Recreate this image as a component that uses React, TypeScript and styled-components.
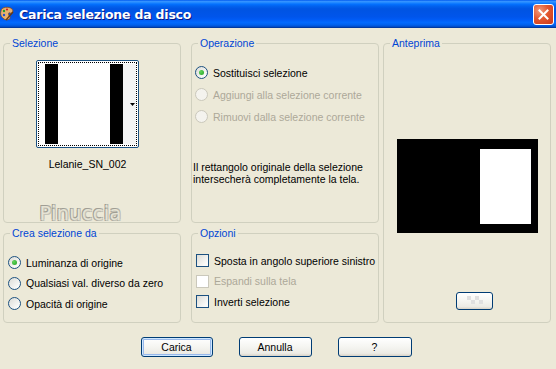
import styled, { createGlobalStyle } from 'styled-components';

const Global = createGlobalStyle`
  html, body { margin: 0; padding: 0; background: #ece9d8; }
  body { font-family: "Liberation Sans", Arial, sans-serif; font-size: 10.5px; color: #000; }
`;

const Window = styled.div`
  width: 556px;
  height: 369px;
  background: #ece9d8;
  display: flex;
  flex-direction: column;
  overflow: hidden;
`;

const TitleBar = styled.div`
  height: 28px;
  display: flex;
  align-items: center;
  padding: 0 1px 0 0;
  background: linear-gradient(to bottom, #0058ee 0%, #3593ff 5%, #288eff 8%, #127dff 12%, #036ffc 16%, #0262ee 22%, #0057e5 30%, #0054e3 36%, #0055eb 60%, #005bf5 70%, #026afe 80%, #0062ef 88%, #0052d6 94%, #0040ab 97%, #003092 100%);
`;

const TitleText = styled.span`
  flex: 1;
  margin-left: 5px;
  color: #fff;
  font-family: "DejaVu Sans", "Liberation Sans", sans-serif;
  font-weight: bold;
  font-size: 12.5px;
  letter-spacing: -0.2px;
  text-shadow: 1px 1px 0 #0a1883;
`;

const CloseButton = styled.div`
  width: 19px;
  height: 19px;
  margin-right: 1px;
  border: 1px solid #fff;
  border-radius: 3px;
  background: radial-gradient(circle at 30% 30%, #f29a7c 0%, #e3572f 45%, #c8381a 100%);
  display: flex;
  align-items: center;
  justify-content: center;
`;

const Body = styled.div`
  display: grid;
  grid-template-columns: 178px 10px 188px 4px 168px;
  grid-template-rows: 186px 96px;
  row-gap: 4px;
  padding: 9px 0 0 3px;
`;

const Group = styled.fieldset<{ $col: number; $row: string }>`
  grid-column: ${p => p.$col};
  grid-row: ${p => p.$row};
  margin: 0;
  padding: 0;
  min-width: 0;
  box-sizing: border-box;
  height: 100%;
  border: 1px solid #d0d0bf;
  border-radius: 4px;
  display: flex;
  flex-direction: column;
`;

const Legend = styled.legend`
  color: #0046d5;
  margin-left: 6px;
  padding: 0 2px;
  line-height: 13px;
`;

const SelectionContent = styled.div`
  display: flex;
  flex-direction: column;
  align-items: center;
  padding-right: 9px;
`;

const Thumb = styled.div`
  margin-top: 10px;
  width: 99px;
  height: 84px;
  border: 1px solid #1c5180;
  border-radius: 2px;
  background: #fff;
  padding: 1px;
  box-sizing: content-box;
`;

const ThumbFocus = styled.div`
  height: 100%;
  border: 1px dotted #000;
  box-sizing: border-box;
  display: flex;
  padding: 1px 0 1px 6px;
  align-items: stretch;
`;

const Bar = styled.div<{ $w: number; $c: string }>`
  width: ${p => p.$w}px;
  background: ${p => p.$c};
`;

const ArrowArea = styled.div`
  flex: 1;
  display: flex;
  align-items: center;
  justify-content: flex-end;
  padding-right: 1px;
  background: #f4f4f4;
`;

const Caption = styled.div`
  margin-top: 10px;
  line-height: 13px;
`;

const Watermark = styled.div`
  margin-top: 31px;
  margin-left: -14px;
  font-family: "DejaVu Sans", sans-serif;
  font-size: 19px;
  letter-spacing: 0.5px;
  line-height: 22px;
  color: #e6e3d4;
  text-shadow: -1px -1px 0 #a09e94, 1px 1px 0 #c4c2b6, 1px -1px 0 #b4b2a8, -1px 1px 0 #acaaa0;
`;

const Options = styled.div<{ $top: number; $gap: number; $left: number }>`
  display: flex;
  flex-direction: column;
  gap: ${p => p.$gap}px;
  margin: ${p => p.$top}px 0 0 ${p => p.$left}px;
`;

const Row = styled.label<{ $disabled?: boolean }>`
  display: flex;
  align-items: center;
  gap: 5px;
  height: 13px;
  color: ${p => (p.$disabled ? '#aca899' : '#000')};
  white-space: nowrap;
`;

const RadioCircle = styled.span<{ $disabled?: boolean }>`
  width: 13px;
  height: 13px;
  box-sizing: border-box;
  border-radius: 50%;
  border: 1px solid ${p => (p.$disabled ? '#cac8bb' : '#1c5180')};
  background: ${p => (p.$disabled ? '#f4f3ee' : 'linear-gradient(135deg, #dcdcd7 0%, #fbfbf9 80%)')};
  display: flex;
  align-items: center;
  justify-content: center;
  flex-shrink: 0;
`;

const RadioDot = styled.span`
  width: 5px;
  height: 5px;
  border-radius: 50%;
  background: radial-gradient(circle at 35% 35%, #63d55d, #21a121);
`;

const CheckBox = styled.span<{ $disabled?: boolean }>`
  width: 13px;
  height: 13px;
  box-sizing: border-box;
  border: 1px solid ${p => (p.$disabled ? '#cac8bb' : '#1c5180')};
  background: ${p => (p.$disabled ? '#fff' : 'linear-gradient(135deg, #dcdcd7 0%, #fbfbf9 80%)')};
  flex-shrink: 0;
`;

const Note = styled.p`
  margin: 38px 0 0 1px;
  line-height: 12px;
`;

const PreviewCanvas = styled.div`
  margin: 89px auto 0;
  width: 141px;
  height: 94px;
  background: #000;
  display: flex;
  justify-content: flex-end;
  padding: 10px 7px 9px 0;
  box-sizing: border-box;
`;

const PreviewSel = styled.div`
  width: 51px;
  background: #fff;
`;

const XpButton = styled.button<{ $w: number; $h?: number; $default?: boolean }>`
  width: ${p => p.$w}px;
  height: ${p => p.$h ?? 20}px;
  border: 1px solid #003c74;
  border-radius: 3px;
  padding: 0;
  font-family: inherit;
  font-size: 10.5px;
  color: #000;
  background: linear-gradient(to bottom, #ffffff 0%, #f5f5f1 50%, #ecebe5 85%, #d8d2c6 100%);
  box-shadow: ${p => (p.$default ? 'inset 0 0 0 1px #cee7ff, inset 0 0 0 2px #98b8ea' : 'none')};
  display: flex;
  align-items: center;
  justify-content: center;
`;

const PreviewButton = styled(XpButton)`
  margin: 59px 0 0 72px;
`;

const Footer = styled.div`
  display: flex;
  justify-content: center;
  gap: 26px;
  padding: 14px 4px 0 0;
`;

function Radio({ label, checked, disabled }: { label: string; checked?: boolean; disabled?: boolean }) {
  return (
    <Row $disabled={disabled}>
      <RadioCircle $disabled={disabled}>{checked && <RadioDot />}</RadioCircle>
      {label}
    </Row>
  );
}

function Check({ label, disabled }: { label: string; disabled?: boolean }) {
  return (
    <Row $disabled={disabled}>
      <CheckBox $disabled={disabled} />
      {label}
    </Row>
  );
}

export default function App() {
  return (
    <>
      <Global />
      <Window>
        <TitleBar>
          <svg width="14" height="16" viewBox="0 0 14 16">
            <path d="M1 5 C1 1 9 0 12 3 C14 5 12 8 10 7 C8 6 8 9 10 11 C11 13 7 15 4 13 C1 11 0 8 1 5Z" fill="#e8b070" stroke="#8a4a1a" strokeWidth="0.8" />
            <circle cx="4" cy="5" r="1.2" fill="#2a9a2a" />
            <circle cx="7" cy="3.5" r="1.1" fill="#d02020" />
            <circle cx="4" cy="9" r="1.2" fill="#2050d0" />
            <path d="M6 14 L13 6" stroke="#6a3a10" strokeWidth="1.4" />
          </svg>
          <TitleText>Carica selezione da disco</TitleText>
          <CloseButton>
            <svg width="11" height="11" viewBox="0 0 11 11">
              <path d="M1.5 1.5 L9.5 9.5 M9.5 1.5 L1.5 9.5" stroke="#fff" strokeWidth="2" strokeLinecap="square" />
            </svg>
          </CloseButton>
        </TitleBar>
        <Body>
          <Group $col={1} $row="1">
            <Legend>Selezione</Legend>
            <SelectionContent>
              <Thumb>
                <ThumbFocus>
                  <Bar $w={13} $c="#000" />
                  <Bar $w={52} $c="#fff" />
                  <Bar $w={13} $c="#000" />
                  <ArrowArea>
                    <svg width="5" height="3" viewBox="0 0 5 3"><path d="M0 0 H5 L2.5 3Z" fill="#000" /></svg>
                  </ArrowArea>
                </ThumbFocus>
              </Thumb>
              <Caption>Lelanie_SN_002</Caption>
              <Watermark>Pinuccia</Watermark>
            </SelectionContent>
          </Group>
          <Group $col={3} $row="1">
            <Legend>Operazione</Legend>
            <Options $top={16} $gap={9} $left={3}>
              <Radio label="Sostituisci selezione" checked />
              <Radio label="Aggiungi alla selezione corrente" disabled />
              <Radio label="Rimuovi dalla selezione corrente" disabled />
            </Options>
            <Note>
              Il rettangolo originale della selezione<br />
              intersecherà completamente la tela.
            </Note>
          </Group>
          <Group $col={5} $row="1 / span 2">
            <Legend>Anteprima</Legend>
            <PreviewCanvas>
              <PreviewSel />
            </PreviewCanvas>
            <PreviewButton $w={37} $h={18}>
              <svg width="24" height="10" viewBox="0 0 24 10">
                <rect x="4" y="0" width="4" height="4" fill="#e0e0e0" />
                <rect x="12" y="0" width="4" height="4" fill="#e0e0e0" />
                <rect x="8" y="4" width="4" height="4" fill="#e0e0e0" />
                <rect x="16" y="4" width="4" height="4" fill="#e0e0e0" />
              </svg>
            </PreviewButton>
          </Group>
          <Group $col={1} $row="2">
            <Legend>Crea selezione da</Legend>
            <Options $top={16} $gap={7.5} $left={4}>
              <Radio label="Luminanza di origine" checked />
              <Radio label="Qualsiasi val. diverso da zero" />
              <Radio label="Opacità di origine" />
            </Options>
          </Group>
          <Group $col={3} $row="2">
            <Legend>Opzioni</Legend>
            <Options $top={14} $gap={7.5} $left={4}>
              <Check label="Sposta in angolo superiore sinistro" />
              <Check label="Espandi sulla tela" disabled />
              <Check label="Inverti selezione" />
            </Options>
          </Group>
        </Body>
        <Footer>
          <XpButton $w={72} $default>Carica</XpButton>
          <XpButton $w={73}>Annulla</XpButton>
          <XpButton $w={74}>?</XpButton>
        </Footer>
      </Window>
    </>
  );
}
